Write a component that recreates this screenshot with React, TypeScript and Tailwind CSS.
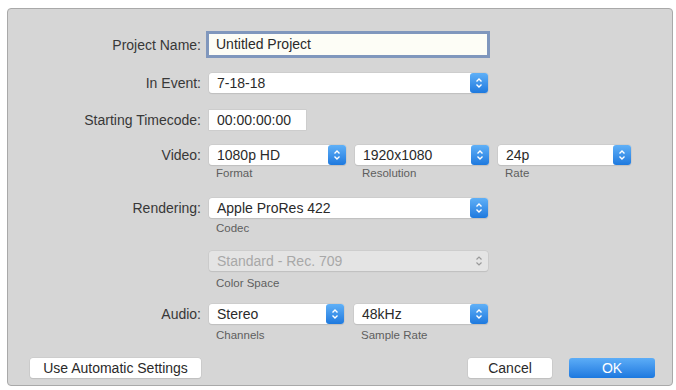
import React from 'react';

// Stepper arrows drawn on the blue pop-up button
const Stepper = ({ disabled = false }: { disabled?: boolean }) =>
  disabled ? (
    <div className="flex h-full w-[18px] items-center justify-center">
      <svg width="8" height="12" viewBox="0 0 8 12" fill="none" stroke="#9a9a9a" strokeWidth="1.2">
        <path d="M1.5 4.5 L4 2 L6.5 4.5" />
        <path d="M1.5 7.5 L4 10 L6.5 7.5" />
      </svg>
    </div>
  ) : (
    <div className="flex h-full w-[18px] items-center justify-center rounded-[3px] bg-gradient-to-b from-[#5fb0f7] to-[#1d79de]">
      <svg width="8" height="12" viewBox="0 0 8 12" fill="none" stroke="#ffffff" strokeWidth="1.4">
        <path d="M1.5 4.5 L4 2 L6.5 4.5" />
        <path d="M1.5 7.5 L4 10 L6.5 7.5" />
      </svg>
    </div>
  );

interface SelectProps {
  value: string;
  width: string;
  disabled?: boolean;
}

const Select = ({ value, width, disabled = false }: SelectProps) => (
  <div
    className={`flex h-[20px] items-center justify-between rounded-[3px] shadow-[0_0_0_0.5px_#c4c4c4,0_1px_1px_rgba(0,0,0,0.12)] ${width} ${
      disabled ? 'bg-[#e4e4e4] text-[#a8a8a8]' : 'bg-white text-[#2a2a2a]'
    }`}
  >
    <span className="pl-[8px] text-[14px] leading-none">{value}</span>
    <Stepper disabled={disabled} />
  </div>
);

const Label = ({ children }: { children: React.ReactNode }) => (
  <div className="w-[194px] shrink-0 pr-[1px] text-right text-[14px] leading-[20px] text-[#383838]">{children}</div>
);

const Sub = ({ children, className = '' }: { children: React.ReactNode; className?: string }) => (
  <div className={`pl-[7px] text-[11.5px] leading-[14px] text-[#5e5e5e] ${className}`}>{children}</div>
);

export default function App() {
  return (
    <div className="h-[390px] w-[676px] bg-white pb-[4px] pl-[7px] pr-[3px] pt-[8px] font-['Liberation_Sans',Arial,sans-serif]">
      <div className="flex h-full w-full flex-col rounded-[4px] border border-[#a9a9a9] bg-[#d6d6d6] pt-[22px]">
        {/* Project Name */}
        <div className="flex h-[27px] items-center">
          <Label>Project Name:</Label>
          <div className="ml-[4px] flex h-[27px] w-[284px] items-center border-[3px] border-[#8097bd] bg-[#fdfdf6] pl-[7px] text-[14px] text-[#2a2a2a]">
            Untitled Project
          </div>
        </div>

        {/* In Event */}
        <div className="mt-[15px] flex items-center">
          <Label>In Event:</Label>
          <div className="ml-[7px]">
            <Select value="7-18-18" width="w-[279px]" />
          </div>
        </div>

        {/* Starting Timecode */}
        <div className="mt-[17px] flex items-center">
          <Label>Starting Timecode:</Label>
          <div className="ml-[7px] flex h-[20px] w-[97px] items-center bg-white pl-[8px] text-[14px] text-[#2a2a2a] shadow-[0_0_0_0.5px_#c4c4c4]">
            00:00:00:00
          </div>
        </div>

        {/* Video */}
        <div className="mt-[15px] flex items-start">
          <Label>Video:</Label>
          <div className="ml-[7px] flex gap-[9px]">
            <div>
              <Select value="1080p HD" width="w-[137px]" />
              <Sub className="mt-[1px]">Format</Sub>
            </div>
            <div>
              <Select value="1920x1080" width="w-[134px]" />
              <Sub className="mt-[1px]">Resolution</Sub>
            </div>
            <div>
              <Select value="24p" width="w-[133px]" />
              <Sub className="mt-[1px]">Rate</Sub>
            </div>
          </div>
        </div>

        {/* Rendering */}
        <div className="mt-[18px] flex items-start">
          <Label>Rendering:</Label>
          <div className="ml-[7px]">
            <Select value="Apple ProRes 422" width="w-[279px]" />
            <Sub className="mt-[3px]">Codec</Sub>
            <div className="mt-[16px]">
              <Select value="Standard - Rec. 709" width="w-[279px]" disabled />
            </div>
            <Sub className="mt-[5px]">Color Space</Sub>
          </div>
        </div>

        {/* Audio */}
        <div className="mt-[14px] flex items-start">
          <Label>Audio:</Label>
          <div className="ml-[7px] flex gap-[10px]">
            <div>
              <Select value="Stereo" width="w-[135px]" />
              <Sub className="mt-[4px]">Channels</Sub>
            </div>
            <div>
              <Select value="48kHz" width="w-[134px]" />
              <Sub className="mt-[4px]">Sample Rate</Sub>
            </div>
          </div>
        </div>

        {/* Buttons */}
        <div className="mt-[16px] flex items-center pl-[22px] pr-[17px]">
          <button className="h-[20px] w-[171px] rounded-[3px] bg-white text-[14px] text-[#2a2a2a] shadow-[0_0_0_0.5px_#c4c4c4,0_1px_1px_rgba(0,0,0,0.12)]">
            Use Automatic Settings
          </button>
          <div className="ml-auto flex gap-[17px]">
            <button className="h-[20px] w-[84px] rounded-[3px] bg-white text-[14px] text-[#2a2a2a] shadow-[0_0_0_0.5px_#c4c4c4,0_1px_1px_rgba(0,0,0,0.12)]">
              Cancel
            </button>
            <button className="h-[20px] w-[86px] rounded-[3px] bg-gradient-to-b from-[#5cadf7] to-[#1b78df] text-[14px] text-white">
              OK
            </button>
          </div>
        </div>
      </div>
    </div>
  );
}
